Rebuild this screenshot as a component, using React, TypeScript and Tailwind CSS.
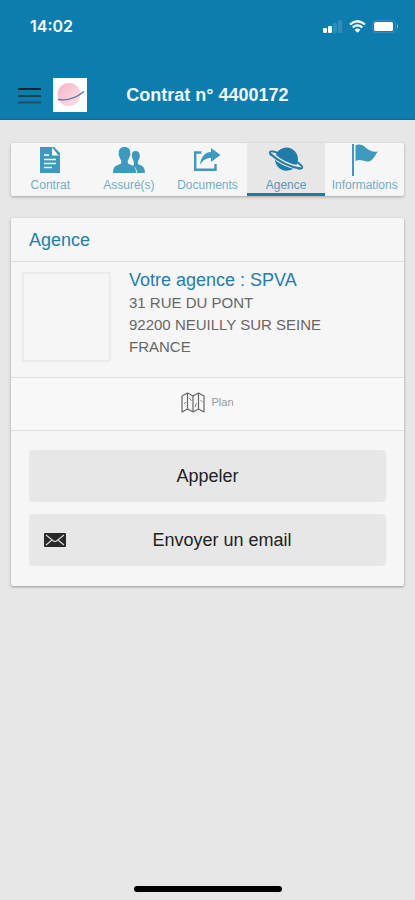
import React from "react";

interface Tab {
  label: string;
  icon: React.ReactNode;
  active?: boolean;
}

const ContractIcon = () => (
  <svg width="20" height="26" viewBox="0 0 20 26" aria-hidden="true">
    <path d="M0 0h12v8.500h8V26H0z" fill="currentColor" />
    <path d="M12 0h2l6 6v2.500h-1.500L13 1.500z" fill="currentColor" />
    <path
      d="M4 8h5M4 12.5h12M4 16.5h12M4 20.5h8"
      stroke="#f6f6f6"
      strokeWidth="1.6"
    />
  </svg>
);

const PeopleIcon = () => (
  <svg width="32" height="26" viewBox="0 0 32 26" aria-hidden="true">
    <path
      d="M22.500 4c3 0 4.400 2 4.200 4.800c.3.900.1 2-.5 2.700c-.3 1.300-.7 2-1.300 2.700v2.800l4.200 2c2 1 2.700 3 2.800 7H24c-.1-3.800-1.400-6-4.500-7.400l1.300-.6v-3.800c-.7-.7-1.100-1.400-1.300-2.700c-.6-.7-.8-1.800-.5-2.700C18.700 6 19.800 4 22.500 4z"
      fill="currentColor"
    />
    <path
      d="M11.500 0c4 0 5.900 2.300 5.700 6.200c.4 1.300.1 2.700-.7 3.500c-.3 1.600-.9 2.700-1.700 3.500v3.300l5 2.300c2.500 1 3.200 4 3.200 7.200H0c0-3.200.7-6.200 3.200-7.200l5-2.300v-3.300c-.8-.8-1.400-1.900-1.700-3.500c-.8-.8-1.100-2.200-.7-3.500C5.600 2.300 7.500 0 11.500 0z"
      fill="currentColor"
    />
  </svg>
);

const ShareIcon = () => (
  <svg width="28" height="24" viewBox="0 0 28 24" aria-hidden="true">
    <path
      d="M8.500 4.500H2.200v17.300h20.300V16"
      fill="none"
      stroke="currentColor"
      strokeWidth="2.400"
    />
    <path
      d="M18 0l9.500 7l-9.500 7V10c-5 0-8 2-11 7C7.800 9 11.500 4.500 18 4z"
      fill="currentColor"
    />
  </svg>
);

const PlanetIcon = () => (
  <svg width="36" height="26" viewBox="0 0 36 26" fill="none" aria-hidden="true">
    <g transform="rotate(26 18 13)">
      <ellipse cx="18" cy="13" rx="18" ry="3.500" stroke="currentColor" strokeWidth="1.800" />
      <circle cx="18" cy="12" r="11.500" fill="currentColor" />
      <path d="M4 14.500q14 4.500 28 0" stroke="#e7e7e7" strokeWidth="4.600" />
      <path d="M1 14.300q17 5 34 0" stroke="currentColor" strokeWidth="2.200" />
    </g>
  </svg>
);

const FlagIcon = () => (
  <svg width="28" height="32" viewBox="0 0 28 32" aria-hidden="true">
    <path d="M1 0h2v32H1z" fill="currentColor" />
    <path
      d="M4.500 1.500c4-2.300 7.500-.5 10 2c3.500 3.200 7 4.800 12.500 4c-2.500 2.700-3.200 5.700-6 8.200c-3 2.600-6 1.900-9 .9c-2.500-.9-4.500-1-7.500.4z"
      fill="currentColor"
    />
  </svg>
);

const MapIcon = () => (
  <svg
    width="24"
    height="21"
    viewBox="0 0 24 21"
    fill="none"
    stroke="#666666"
    strokeWidth="1.200"
    strokeLinejoin="round"
    aria-hidden="true"
  >
    <path d="M1 4l5.500-3L12 4l5.500-3L23 4v16l-5.500-3L12 20l-5.500-3L1 20z" />
    <path d="M6.500 1v16M12 4v16M17.500 1v16" />
    <path d="M3 12l2-2M8.500 6l2 3M14 15l1.500-4M19.500 8l2 2" strokeWidth=".8" />
  </svg>
);

const MailIcon = () => (
  <svg width="22" height="14" viewBox="0 0 22 14" aria-hidden="true">
    <rect width="22" height="14" rx="1" fill="#292929" />
    <path
      d="M2 2l7.500 6q1.500 1 3 0L20 2M2 12l6-5M20 12l-6-5"
      fill="none"
      stroke="#dddddd"
      strokeWidth="1.100"
    />
  </svg>
);

const tabs: Tab[] = [
  { label: "Contrat", icon: <ContractIcon /> },
  { label: "Assuré(s)", icon: <PeopleIcon /> },
  { label: "Documents", icon: <ShareIcon /> },
  { label: "Agence", icon: <PlanetIcon />, active: true },
  { label: "Informations", icon: <FlagIcon /> },
];

const StatusBar = () => (
  <div className="flex h-[52px] items-center justify-between pl-[30px] pr-4 text-white">
    <span className="font-['Inter',sans-serif] text-base font-semibold">
      14:02
    </span>
    <div className="flex items-center gap-1.5">
      <svg width="20" height="13" viewBox="0 0 20 13" aria-hidden="true">
        <rect y="8" width="4" height="5" rx="1" fill="white" />
        <rect x="5" y="6" width="4" height="7" rx="1" fill="white" />
        <rect x="10" y="3" width="4" height="10" rx="1" fill="#328eb9" />
        <rect x="15" width="4" height="13" rx="1" fill="#328eb9" />
      </svg>
      <svg width="17" height="13" viewBox="0 0 17 13" aria-hidden="true">
        <path
          d="M1 4.500q7.500-6.500 15 0M3.700 7.400q4.800-4 9.600 0"
          fill="none"
          stroke="white"
          strokeWidth="2.200"
        />
        <path d="M5.600 9.700q2.900-2.300 5.800 0L8.500 12.800z" fill="white" />
      </svg>
      <svg width="27" height="13" viewBox="0 0 27 13" aria-hidden="true">
        <rect x=".5" y=".5" width="23" height="12" rx="3.500" fill="none" stroke="#328eb9" />
        <rect x="2" y="2" width="19" height="9" rx="1.500" fill="white" />
        <path d="M25 4q2 2.500 0 5z" fill="#8bc0d8" />
      </svg>
    </div>
  </div>
);

const Header = () => (
  <header className="h-[120px] border-b border-[#096a98] bg-[#0d7dae]">
    <StatusBar />
    <div className="mt-[18px] grid h-[50px] grid-cols-[1fr_auto_1fr] items-center">
      <div className="flex items-center gap-3 pl-[18px]">
        <button type="button" aria-label="Menu">
          <svg width="23" height="17" viewBox="0 0 23 17" aria-hidden="true">
            <path d="M0 2h23" stroke="#102733" strokeWidth="2" />
            <path d="M0 9h23" stroke="#173f51" strokeWidth="2" />
            <path d="M0 15.500h23" stroke="#1c5068" strokeWidth="2" />
          </svg>
        </button>
        <svg width="34" height="34" viewBox="0 0 34 34" aria-hidden="true">
          <defs>
            <linearGradient id="globe" x1="0" y1="0" x2="1" y2="1">
              <stop offset="0" stopColor="#f8b4c6" />
              <stop offset="1" stopColor="#fbe1e7" />
            </linearGradient>
          </defs>
          <rect width="34" height="34" fill="white" />
          <circle cx="16" cy="16.500" r="11.500" fill="url(#globe)" />
          <path
            d="M5 21.500q14 2 26-8"
            fill="none"
            stroke="#6074ad"
            strokeWidth="1.400"
          />
        </svg>
      </div>
      <h1 className="text-lg font-bold text-[#eef6fb]">Contrat n° 4400172</h1>
    </div>
  </header>
);

const TabBar = () => (
  <nav className="grid grid-cols-5 rounded-xs bg-[#f6f6f6] shadow-[0_1px_3px_rgba(0,0,0,0.3)]">
    {tabs.map((tab) => (
      <button
        key={tab.label}
        type="button"
        aria-current={tab.active ? "page" : undefined}
        className={`flex h-[53px] flex-col items-center border-b-[3px] ${
          tab.active
            ? "border-[#207ba6] bg-[#e7e7e7] text-[#207ba6]"
            : "border-transparent text-[#3d9abd]"
        }`}
      >
        <span className="flex h-[34px] items-center">{tab.icon}</span>
        <span
          className={`text-xs ${tab.active ? "text-[#5999b8]" : "text-[#73adc5]"}`}
        >
          {tab.label}
        </span>
      </button>
    ))}
  </nav>
);

const AgencyCard = () => (
  <section className="rounded-xs bg-[#f6f6f6] shadow-[0_1px_3px_rgba(0,0,0,0.35)]">
    <h2 className="flex h-11 items-center border-b border-[#dddddd] px-[18px] text-lg text-[#247dab]">
      Agence
    </h2>
    <div className="flex gap-[18px] border-b border-[#dddddd] px-[11px] pt-2.5 pb-[15px]">
      <div className="h-[90px] w-[89px] shrink-0 border-2 border-[#ebebeb]" />
      <div className="text-[15px] leading-[22px] text-[#666666]">
        <h3 className="-mt-1 text-lg leading-6 text-[#247dab]">
          Votre agence : SPVA
        </h3>
        <address className="not-italic">
          31 RUE DU PONT
          <br />
          92200 NEUILLY SUR SEINE
          <br />
          FRANCE
        </address>
      </div>
    </div>
    <button
      type="button"
      className="flex h-[53px] w-full items-center justify-center gap-1.5 border-b border-[#dddddd] bg-[#f8f8f8] pb-1 text-[11px] text-[#999999]"
    >
      <MapIcon />
      Plan
    </button>
    <div className="flex flex-col gap-3 px-[18px] pt-[19px] pb-5 text-lg text-[#222222]">
      <button type="button" className="h-[52px] rounded bg-[#e7e7e7]">
        Appeler
      </button>
      <button
        type="button"
        className="flex h-[52px] items-center rounded bg-[#e7e7e7] pl-[15px] pr-2"
      >
        <MailIcon />
        <span className="flex-1">Envoyer un email</span>
      </button>
    </div>
  </section>
);

const App: React.FC = () => {
  return (
    <div className="flex min-h-screen flex-col bg-[#e7e7e7] font-['Liberation_Sans',Arial,sans-serif]">
      <Header />
      <main className="flex flex-col gap-[22px] px-[11px] pt-[23px] pb-6">
        <TabBar />
        <AgencyCard />
      </main>
      <div className="mx-auto mt-auto mb-2 h-1.5 w-[148px] rounded-full bg-black" />
    </div>
  );
};

export default App;
